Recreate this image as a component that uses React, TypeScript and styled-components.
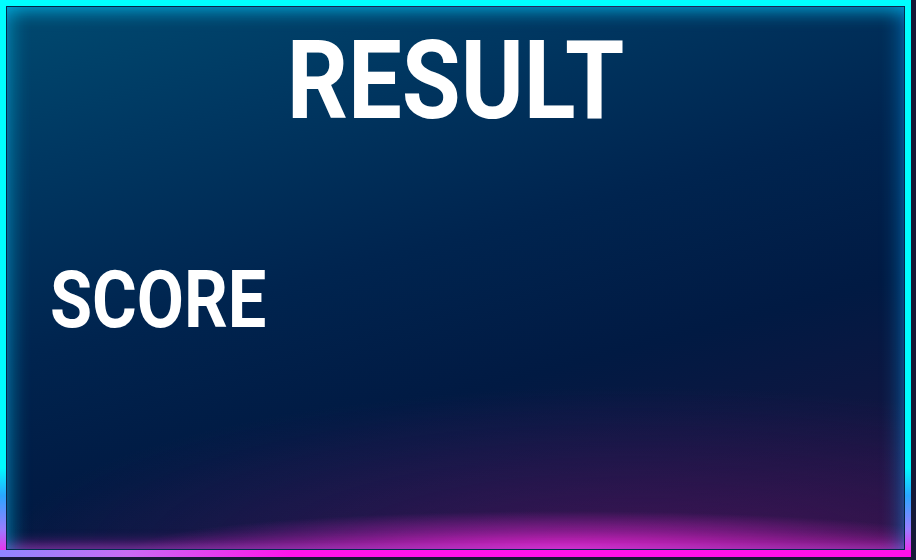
import styled, { createGlobalStyle } from "styled-components";

const GlobalStyle = createGlobalStyle`
  html, body {
    margin: 0;
    padding: 0;
    background: #151937;
  }
  * {
    box-sizing: border-box;
  }
`;

const Frame = styled.div`
  position: relative;
  width: 911px;
  height: 557px;
  padding: 6px 6px 7px;
  background: linear-gradient(180deg, #00ffff 0%, #00fbff 84%, #2aa6ff 89%, #9a7cff 95%, #ff1ee6 100%);

  &::after {
    content: "";
    position: absolute;
    left: 0;
    right: 0;
    bottom: 0;
    height: 7px;
    background: linear-gradient(90deg, #8f86ff 0%, #c86cf4 14%, #ff14ea 32%, #ff10e8 100%);
  }
`;

const Panel = styled.div`
  height: 100%;
  display: flex;
  flex-direction: column;
  border: 1px solid rgba(0, 40, 70, 0.8);
  background:
    radial-gradient(ellipse 48% 7% at 62% 100%, rgba(255, 40, 230, 0.75), rgba(255, 40, 230, 0) 100%),
    radial-gradient(ellipse 70% 30% at 70% 100%, rgba(110, 20, 110, 0.45), rgba(110, 20, 110, 0) 100%),
    linear-gradient(165deg, #004a70 0%, #003862 20%, #00244f 45%, #011a43 65%, #121540 85%, #221342 100%);
  box-shadow:
    inset 0 16px 16px -10px rgba(0, 190, 240, 0.6),
    inset 16px 0 18px -10px rgba(0, 200, 240, 0.45),
    inset -16px 0 18px -10px rgba(0, 160, 240, 0.4),
    inset 0 -12px 14px -8px rgba(255, 40, 220, 0.55);
  color: #ffffff;
  font-family: Roboto, "Liberation Sans", sans-serif;
  font-weight: 700;
`;

const Title = styled.h1`
  margin: 19px 0 0;
  font-size: 110px;
  line-height: 1;
  font-weight: 700;
  text-align: center;
  transform: scaleX(0.87);
`;

const Label = styled.h2`
  margin: 124px 0 0 43px;
  font-size: 80px;
  line-height: 1;
  font-weight: 700;
  transform: scaleX(0.855);
  transform-origin: left center;
`;

export default function App() {
  return (
    <>
      <GlobalStyle />
      <Frame>
        <Panel>
          <Title>RESULT</Title>
          <Label>SCORE</Label>
        </Panel>
      </Frame>
    </>
  );
}
